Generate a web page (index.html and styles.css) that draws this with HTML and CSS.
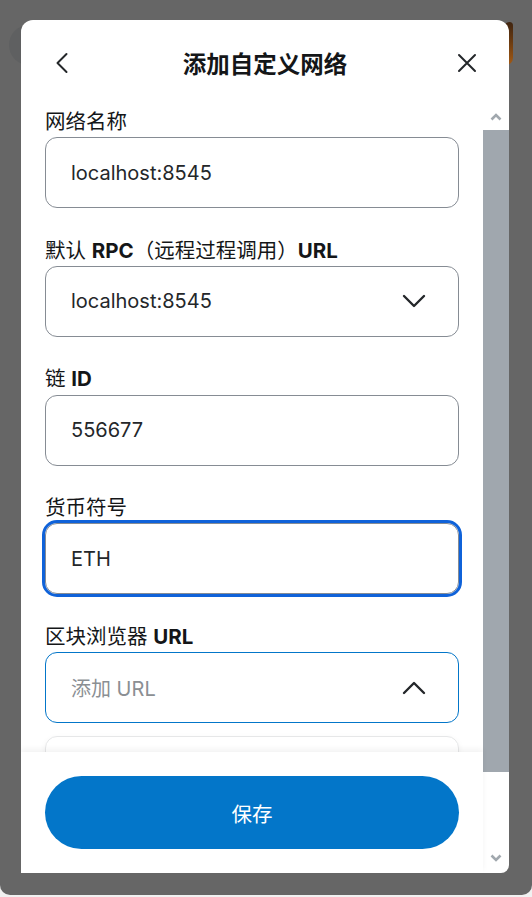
FILE: index.html
```html
<!DOCTYPE html>
<html lang="zh-CN">
<head>
    <meta charset="UTF-8">
    <meta name="viewport" content="width=device-width, initial-scale=1.0">
    <title>添加自定义网络</title>
    <link rel="stylesheet" href="styles.css">
</head>
<body>
    <div class="screen">
        <!-- dimmed app behind the overlay -->
        <span class="bg-account"></span>
        <span class="bg-fox"></span>

        <div class="modal">
            <div class="modal-header">
                <button class="icon-button" aria-label="返回">
                    <svg width="24" height="24" viewBox="0 0 24 24"><path d="M15.5 3 L6.5 12 L15.5 21" fill="none" stroke="#24272a" stroke-width="2" stroke-linecap="round" stroke-linejoin="round"/></svg>
                </button>
                <h2>添加自定义网络</h2>
                <button class="icon-button" aria-label="关闭">
                    <svg width="24" height="24" viewBox="0 0 24 24"><path d="M4 4 L20 20 M20 4 L4 20" fill="none" stroke="#24272a" stroke-width="2" stroke-linecap="round"/></svg>
                </button>
            </div>

            <div class="modal-body">
                <div class="modal-main">
                    <div class="fields">
                        <div class="field">
                            <label>网络名称</label>
                            <div class="input-box">localhost:8545</div>
                        </div>

                        <div class="field">
                            <label>默认 <b>RPC</b>（远程过程调用）<b>URL</b></label>
                            <div class="input-box">
                                <span>localhost:8545</span>
                                <svg class="chevron" width="24" height="14" viewBox="0 0 24 14"><path d="M2 2 L12 12 L22 2" fill="none" stroke="#24272a" stroke-width="2.4" stroke-linecap="round" stroke-linejoin="round"/></svg>
                            </div>
                        </div>

                        <div class="field">
                            <label>链 <b>ID</b></label>
                            <div class="input-box">556677</div>
                        </div>

                        <div class="field">
                            <label>货币符号</label>
                            <div class="input-box focused">ETH</div>
                        </div>

                        <div class="field">
                            <label>区块浏览器 <b>URL</b></label>
                            <div class="input-box open">
                                <span class="placeholder">添加 URL</span>
                                <svg class="chevron" width="24" height="14" viewBox="0 0 24 14"><path d="M2 12 L12 2 L22 12" fill="none" stroke="#24272a" stroke-width="2.4" stroke-linecap="round" stroke-linejoin="round"/></svg>
                            </div>
                            <div class="dropdown-list"></div>
                        </div>
                    </div>

                    <div class="modal-footer">
                        <button class="save-button">保存</button>
                    </div>
                </div>

                <!-- scrollbar -->
                <div class="scrollbar">
                    <div class="scroll-arrow">
                        <svg width="12" height="8" viewBox="0 0 12 8"><path d="M1.5 6.5 L6 2 L10.5 6.5" fill="none" stroke="#a1a8ae" stroke-width="2.6"/></svg>
                    </div>
                    <div class="scroll-thumb"></div>
                    <div class="scroll-arrow bottom">
                        <svg width="12" height="8" viewBox="0 0 12 8"><path d="M1.5 1.5 L6 6 L10.5 1.5" fill="none" stroke="#a1a8ae" stroke-width="2.6"/></svg>
                    </div>
                </div>
            </div>
        </div>
    </div>
</body>
</html>
```

FILE: styles.css
```css
/* Basic reset */
* {
    box-sizing: border-box;
    margin: 0;
    padding: 0;
}

body {
    font-family: Inter, "Noto Sans CJK SC", sans-serif;
    background-color: #f1f1f1;
    color: #24272a;
}

/* dark overlay over the app */
.screen {
    position: relative;
    height: 895px;
    background-color: #666666;
    border-radius: 0 0 10px 10px;
    padding: 20px 23px 0 21px;
}

.bg-account {
    position: absolute;
    left: 9px;
    top: 25px;
    width: 40px;
    height: 40px;
    border-radius: 50%;
    background-color: #5f6061;
}

.bg-fox {
    position: absolute;
    left: 504px;
    top: 22px;
    width: 9px;
    height: 43px;
    border-radius: 6px 4px 8px 2px;
    background: linear-gradient(#3f2410, #6a3a10 45%, #a35a14);
}

.modal {
    position: relative;
    width: 488px;
    height: 853px;
    background-color: white;
    border-radius: 12px 12px 8px 0;
    display: flex;
    flex-direction: column;
    overflow: hidden;
}

.modal-header {
    height: 80px;
    padding: 6px 30px 0 30px;
    display: flex;
    align-items: center;
    justify-content: space-between;
}

.modal-header h2 {
    font-size: 23.5px;
    font-weight: 700;
    color: #141618;
}

.icon-button {
    width: 24px;
    height: 24px;
    border: none;
    background: none;
    display: flex;
}

.modal-body {
    flex: 1;
    display: flex;
    min-height: 0;
}

.modal-main {
    flex: 1;
    display: flex;
    flex-direction: column;
}

.fields {
    flex: 1;
    overflow: hidden;
    padding: 10px 24px 0 24px;
}

.field {
    margin-bottom: 30.4px;
}

.field label {
    display: block;
    font-size: 20.5px;
    line-height: 24px;
    font-weight: 400;
    color: #141618;
    margin-bottom: 3.3px;
}

.field label b {
    font-weight: 700;
}

.input-box {
    height: 71px;
    border: 1px solid #868c94;
    border-radius: 12px;
    padding: 0 32px 0 25px;
    display: flex;
    align-items: center;
    justify-content: space-between;
    font-size: 20px;
    color: #24272a;
}

.input-box.focused {
    outline: 3px solid #0f62d9;
}

.input-box.open {
    border-color: #0376c9;
}

.placeholder {
    color: #8b8f93;
}

.dropdown-list {
    height: 40px;
    margin-top: 13px;
    border: 1px solid #e6e7e8;
    border-radius: 12px;
    box-shadow: 0 2px 6px rgba(0, 0, 0, 0.05);
}

.modal-footer {
    position: relative;
    height: 121px;
    padding: 24px 24px 0 24px;
    background-color: white;
    box-shadow: 0 -3px 6px rgba(0, 0, 0, 0.05);
}

.save-button {
    width: 100%;
    height: 73px;
    border: none;
    border-radius: 37px;
    background-color: #0376c9;
    color: white;
    font-family: Inter, "Noto Sans CJK SC", sans-serif;
    font-size: 20.5px;
}

/* fake scrollbar on the right */
.scrollbar {
    width: 26px;
    display: flex;
    flex-direction: column;
}

.scroll-arrow {
    height: 30px;
    padding-top: 4px;
    display: flex;
    align-items: center;
    justify-content: center;
}

.scroll-arrow.bottom {
    margin-top: auto;
    height: 30px;
    padding-top: 0;
    padding-bottom: 0;
}

.scroll-thumb {
    height: 642px;
    background-color: #a0a7ae;
}
```
